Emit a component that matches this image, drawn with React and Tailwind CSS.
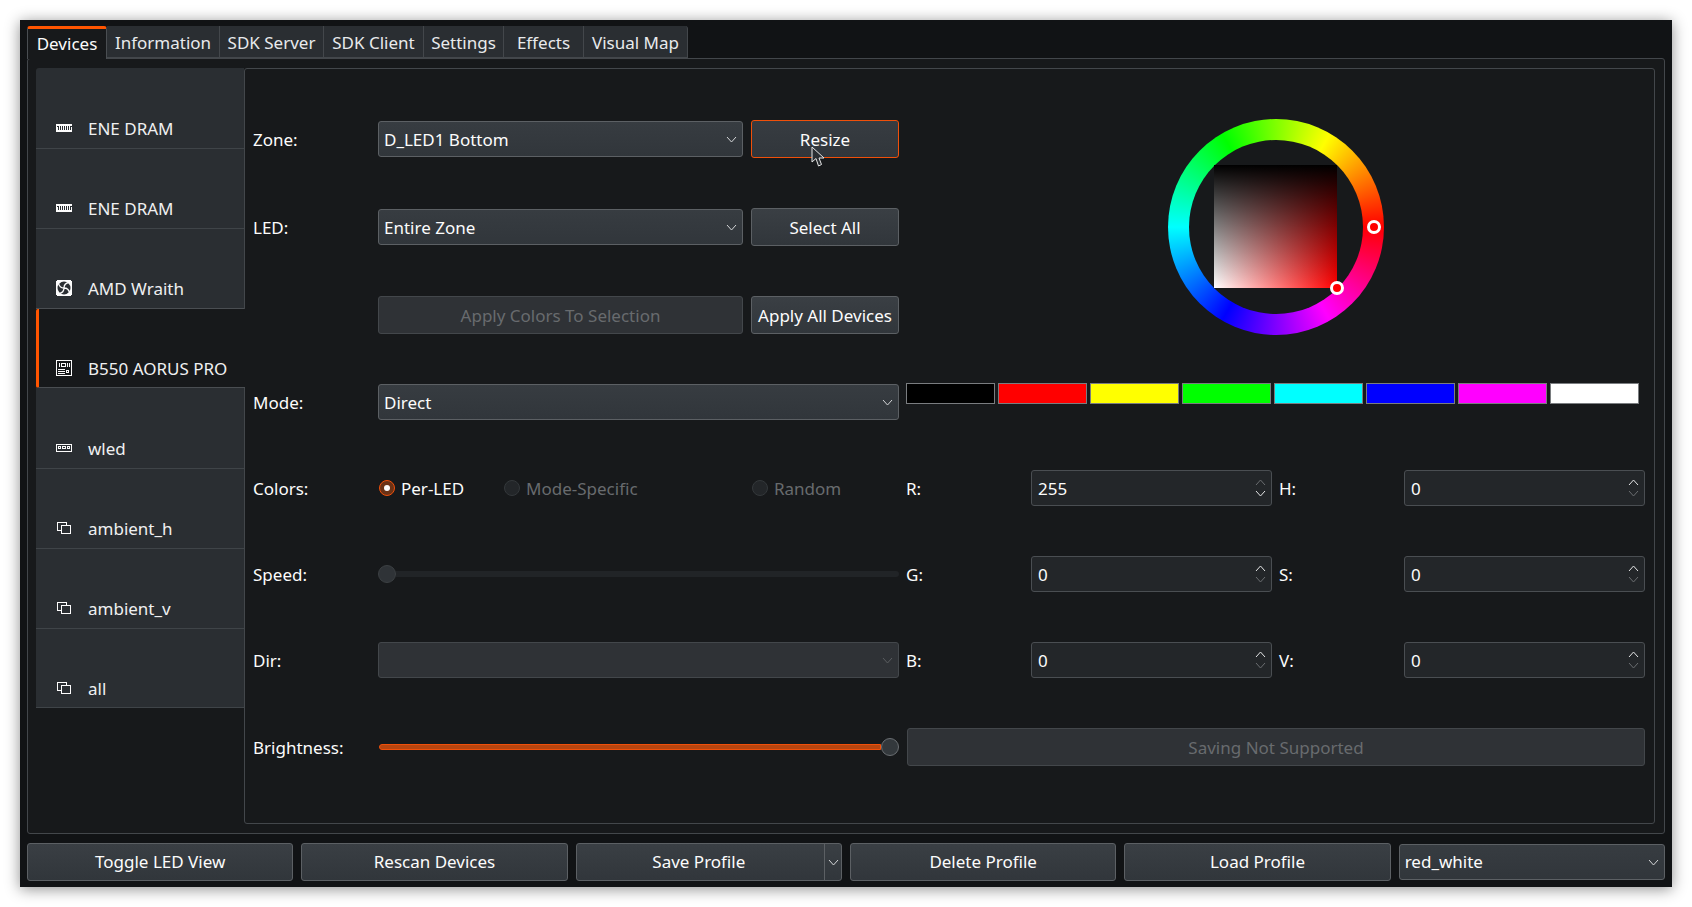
import React from 'react';

const tabs = [
  { name: 'Devices', width: 'w-[80px]' },
  { name: 'Information', width: 'w-[113px]' },
  { name: 'SDK Server', width: 'w-[104px]' },
  { name: 'SDK Client', width: 'w-[100px]' },
  { name: 'Settings', width: 'w-[80px]' },
  { name: 'Effects', width: 'w-[80px]' },
  { name: 'Visual Map', width: 'w-[104px]' },
];

const swatches = [
  'bg-[#000000]',
  'bg-[#ff0000]',
  'bg-[#ffff00]',
  'bg-[#00ff00]',
  'bg-[#00ffff]',
  'bg-[#0000ff]',
  'bg-[#ff00ff]',
  'bg-[#ffffff]',
];

const DramIcon = () => (
  <svg width="16" height="16" viewBox="0 0 16 16" shapeRendering="crispEdges" fill="#fcfcfc">
    <path fillRule="evenodd" d="M0 4h16v8H0zM1 6v1h1v3h1V6zm3 0v4h1V6zm2 0v4h1V6zm2 0v4h1V6zm2 0v4h1V6zm2 0v4h1V6zm2 0v4h1V7h1V6z" />
  </svg>
);

const FanIcon = () => (
  <svg width="16" height="16" viewBox="0 0 16 16">
    <rect width="16" height="16" fill="#fcfcfc" />
    <circle cx="8" cy="8" r="6.5" fill="#2a2e32" />
    <path fill="none" stroke="#fcfcfc" strokeWidth="1.3" d="M8 8C8 5 10 3 13 2.500M8 8C11 8 13 10 13.500 13M8 8C8 11 6 13 3 13.500M8 8C5 8 3 6 2.500 3" />
    <path fill="#2a2e32" d="M0 0h1v1H0zM15 0h1v1h-1zM0 15h1v1H0zM15 15h1v1h-1z" />
  </svg>
);

const BoardIcon = () => (
  <svg width="16" height="16" viewBox="0 0 16 16" shapeRendering="crispEdges" fill="#fcfcfc">
    <path fillRule="evenodd" d="M0 0h16v16H0zM1 1v14h14V1z" />
    <path fillRule="evenodd" d="M3 3h1v4H3zM5 3h5v4H5zM6 4v2h3V4zM11 3h1v4h-1zM13 3h1v4h-1zM2 9h7v1H2zM2 11h7v1H2zM2 13h7v1H2zM10 10h3v3h-3zM11 11v1h1v-1z" />
  </svg>
);

const LedIcon = () => (
  <svg width="16" height="16" viewBox="0 0 16 16" shapeRendering="crispEdges" fill="#fcfcfc">
    <path fillRule="evenodd" d="M0 4h16v8H0zM1 5v6h14V5z" />
    <path fillRule="evenodd" d="M2 6h3v3H2zM3 7v1h1V7zM6 6h4v3H6zM7 7v1h2V7zM11 6h3v3h-3zM12 7v1h1V7z" />
  </svg>
);

const VirtualIcon = () => (
  <svg width="16" height="16" viewBox="0 0 16 16" shapeRendering="crispEdges" fill="#fcfcfc">
    <path fillRule="evenodd" d="M1 2h10v3h4v9H5v-3H1zM2 3v7h3V5h5V3zM6 6v7h8V6z" />
  </svg>
);

const devices = [
  { name: 'ENE DRAM', Icon: DramIcon, height: 'h-[81px]', pad: 'pb-[8px]' },
  { name: 'ENE DRAM', Icon: DramIcon, height: 'h-[80px]', pad: 'pb-[8px]' },
  { name: 'AMD Wraith', Icon: FanIcon, height: 'h-[80px]', pad: 'pb-[8px]' },
  { name: 'B550 AORUS PRO', Icon: BoardIcon, height: 'h-[79px]', pad: 'pb-[7px]', selected: true },
  { name: 'wled', Icon: LedIcon, height: 'h-[81px]', pad: 'pb-[8px]' },
  { name: 'ambient_h', Icon: VirtualIcon, height: 'h-[80px]', pad: 'pb-[8px]' },
  { name: 'ambient_v', Icon: VirtualIcon, height: 'h-[80px]', pad: 'pb-[8px]' },
  { name: 'all', Icon: VirtualIcon, height: 'h-[79px]', pad: 'pb-[7px]' },
];

const Chevron = ({ up, color = '#d4d6d8' }) => (
  <svg width="11" height="7" viewBox="0 0 11 7" fill="none" stroke={color} strokeWidth="1">
    <path d={up ? 'M1 6l4.500-5L10 6' : 'M1 1l4.500 5L10 1'} />
  </svg>
);

const Button = ({ children, active, disabled, bottom, className = '' }) => (
  <div
    className={`flex h-[38px] items-center justify-center rounded-[3px] border ${
      disabled
        ? 'border-[#43474b] bg-[#2f3236] text-[#686b6e]'
        : active
          ? 'border-[#f0500a] bg-gradient-to-b from-[#373c41] to-[#31363b] text-[#fcfcfc]'
          : 'border-[#5c6064] bg-gradient-to-b from-[#3a3f44] to-[#31363b] text-[#fcfcfc]'
    } ${className}`}
  >
    <span className={bottom ? '' : 'pt-[2px]'}>{children}</span>
  </div>
);

const Combo = ({ value, disabled, bottom, className = '' }) => (
  <div
    className={`flex h-[36px] items-center justify-between rounded-[3px] border pl-[5px] pr-[5px] ${
      disabled
        ? 'border-[#43474b] bg-[#2f3236]'
        : 'border-[#5c6064] bg-gradient-to-b from-[#373c41] to-[#31363b] text-[#fcfcfc]'
    } ${className}`}
  >
    <span className={bottom ? '' : 'pt-[2px]'}>{value}</span>
    <Chevron color={disabled ? '#5a5d60' : '#d4d6d8'} />
  </div>
);

const Spin = ({ value, upDim, downDim }) => (
  <div className="flex h-[36px] items-center justify-between rounded-[3px] border border-[#4a4e52] bg-[#232629] pl-[6px] pr-[5px] text-[#fcfcfc]">
    <span className="pt-[2px]">{value}</span>
    <div className="flex flex-col gap-[4px]">
      <Chevron up color={upDim ? '#6a6d70' : '#e4e5e6'} />
      <Chevron color={downDim ? '#6a6d70' : '#e4e5e6'} />
    </div>
  </div>
);

const Radio = ({ label, checked, disabled, className = '' }) => (
  <div className={`flex items-center gap-[6px] pl-px ${className}`}>
    {checked ? (
      <div className="flex h-[16px] w-[16px] items-center justify-center rounded-full border border-[#f0500a] bg-[#6b3216]">
        <div className="h-[6px] w-[6px] rounded-full bg-[#fcfcfc]" />
      </div>
    ) : (
      <div className="h-[16px] w-[16px] rounded-full border border-[#34383b] bg-[#232629]" />
    )}
    <span className={`pt-[2px] ${disabled ? 'text-[#686b6e]' : 'text-[#fcfcfc]'}`}>{label}</span>
  </div>
);

const Label = ({ children }) => <div className="pt-[2px] text-[#fcfcfc]">{children}</div>;

const ColorWheel = () => (
  <div className="relative ml-px h-[216px] w-[216px] rounded-full bg-[conic-gradient(from_90deg,#f00,#f0f,#00f,#0ff,#0f0,#ff0,#f00)]">
    <div className="absolute inset-[21px] rounded-full bg-[#17191b]" />
    <div className="absolute left-[46px] top-[46px] h-[123px] w-[123px] bg-[linear-gradient(to_bottom,#000,transparent),linear-gradient(to_right,#fff,#f00)]" />
    <div className="absolute left-[199px] top-[101px] h-[14px] w-[14px] rounded-full border-[3px] border-white bg-[#ff0000]" />
    <div className="absolute left-[162px] top-[162px] h-[14px] w-[14px] rounded-full border-[3px] border-white bg-[#ff0000]" />
  </div>
);

const Cursor = () => (
  <svg
    className="absolute left-[60px] top-[26px]"
    width="14"
    height="22"
    viewBox="0 0 14 22"
    fill="#2a2e32"
    stroke="#e8e8e8"
    strokeWidth="1"
  >
    <path d="M1 1v15l4-3.500L7.500 20l3-1.500L8 12h5z" />
  </svg>
);

const App = () => {
  return (
    <div className="min-h-screen bg-white pl-[20px] pt-[20px] font-['Noto_Sans',sans-serif] text-[17px] leading-[22px]">
      <div className="flex h-[867px] w-[1652px] flex-col bg-[#111315] px-[7px] pb-[7px] pt-[6px] shadow-[0_2px_14px_rgba(0,0,0,0.45)]">
        {/* Tabs */}
        <div className="relative z-10 flex h-[33px] shrink-0">
          {tabs.map((tab, i) => (
            <div
              key={tab.name}
              className={`flex items-center justify-center ${tab.width} ${
                i === 0
                  ? 'h-[33px] rounded-t-[3px] border-x border-t-[3px] border-x-[#4a4e52] border-t-[#ff5500] bg-[#17191b] pb-[1px] text-[#fcfcfc]'
                  : 'h-[32px] border-b border-r border-[#43474b] bg-[#2a2e32] pt-[3px] text-[#e8eaec]'
              } ${i === tabs.length - 1 ? 'rounded-tr-[3px]' : ''}`}
            >
              {tab.name}
            </div>
          ))}
        </div>

        {/* Pane */}
        <div className="-mt-px flex h-[776px] shrink-0 rounded-[3px] border border-[#43474b] bg-[#17191b] pb-[8px] pl-[8px] pr-[9px] pt-[9px]">
          {/* Device list */}
          <div className="w-[208px] shrink-0">
            {devices.map(({ name, Icon, height, pad, selected }, i) => (
              <div
                key={i}
                className={`flex items-end border-b ${height} ${pad} ${
                  selected
                    ? 'relative z-10 -mr-px rounded-l-[2px] border-l-[3px] border-b-[#4a4e52] border-l-[#ff5500] bg-[#17191b] pl-[17px]'
                    : `border-b-[#3f4448] bg-[#2a2e32] pl-[20px] ${i === 0 ? 'rounded-tl-[3px]' : ''} ${
                        i === 2 ? 'border-b-[#4a4e52]' : ''
                      }`
                }`}
              >
                <div className="flex items-center gap-[16px]">
                  <div className="mb-[2px] h-[16px]">
                    <Icon />
                  </div>
                  <span className="text-[#eff0f1]">{name}</span>
                </div>
              </div>
            ))}
          </div>

          {/* Controls */}
          <div className="h-[756px] flex-1 rounded-[3px] border border-[#43474b] pl-[8px] pt-[26px]">
            <div className="grid grid-cols-[125px_365px_8px_148px_7px_125px_241px_7px_125px_241px] grid-rows-[88px_88px_88px_86px_86px_86px_86px_88px] items-center">
              <Label>Zone:</Label>
              <Combo value="D_LED1 Bottom" />
              <div className="relative col-start-4">
                <Button active>Resize</Button>
                <Cursor />
              </div>
              <div className="col-start-6 col-end-11 row-start-1 row-end-4 flex justify-center">
                <ColorWheel />
              </div>

              <div className="col-start-1 row-start-2"><Label>LED:</Label></div>
              <div className="col-start-2 row-start-2"><Combo value="Entire Zone" /></div>
              <div className="col-start-4 row-start-2"><Button>Select All</Button></div>

              <div className="col-start-2 row-start-3"><Button disabled>Apply Colors To Selection</Button></div>
              <div className="col-start-4 row-start-3"><Button>Apply All Devices</Button></div>

              <div className="col-start-1 row-start-4"><Label>Mode:</Label></div>
              <div className="col-start-2 col-end-5 row-start-4"><Combo value="Direct" /></div>
              <div className="col-start-6 col-end-11 row-start-4 mt-[24px] flex gap-[3px] self-start">
                {swatches.map(color => (
                  <div key={color} className={`h-[21px] w-[89px] border border-[#7a7d80] ${color}`} />
                ))}
              </div>

              <div className="col-start-1 row-start-5"><Label>Colors:</Label></div>
              <div className="col-start-2 col-end-5 row-start-5 flex">
                <Radio label="Per-LED" checked className="w-[125px]" />
                <Radio label="Mode-Specific" disabled className="w-[248px]" />
                <Radio label="Random" disabled />
              </div>
              <div className="col-start-6 row-start-5"><Label>R:</Label></div>
              <div className="col-start-7 row-start-5"><Spin value="255" upDim /></div>
              <div className="col-start-9 row-start-5"><Label>H:</Label></div>
              <div className="col-start-10 row-start-5"><Spin value="0" downDim /></div>

              <div className="col-start-1 row-start-6"><Label>Speed:</Label></div>
              <div className="col-start-2 col-end-5 row-start-6 flex items-center">
                <div className="h-[18px] w-[18px] shrink-0 rounded-full border border-[#3c4043] bg-[#2f3337]" />
                <div className="h-[6px] flex-1 rounded-r-full bg-[#212427]" />
              </div>
              <div className="col-start-6 row-start-6"><Label>G:</Label></div>
              <div className="col-start-7 row-start-6"><Spin value="0" downDim /></div>
              <div className="col-start-9 row-start-6"><Label>S:</Label></div>
              <div className="col-start-10 row-start-6"><Spin value="0" downDim /></div>

              <div className="col-start-1 row-start-7"><Label>Dir:</Label></div>
              <div className="col-start-2 col-end-5 row-start-7"><Combo disabled /></div>
              <div className="col-start-6 row-start-7"><Label>B:</Label></div>
              <div className="col-start-7 row-start-7"><Spin value="0" downDim /></div>
              <div className="col-start-9 row-start-7"><Label>V:</Label></div>
              <div className="col-start-10 row-start-7"><Spin value="0" downDim /></div>

              <div className="col-start-1 row-start-8"><Label>Brightness:</Label></div>
              <div className="col-start-2 col-end-5 row-start-8 ml-px flex items-center">
                <div className="h-[6px] flex-1 rounded-l-full border border-[#f0500a] bg-[#b8450f]" />
                <div className="h-[18px] w-[18px] shrink-0 rounded-full border border-[#6a6e72] bg-[#33383c]" />
              </div>
              <div className="col-start-6 col-end-11 row-start-8 ml-px"><Button disabled>Saving Not Supported</Button></div>
            </div>
          </div>
        </div>

        {/* Bottom buttons */}
        <div className="mt-[9px] grid grid-cols-6 items-center gap-x-[8px]">
          <Button bottom>Toggle LED View</Button>
          <Button bottom>Rescan Devices</Button>
          <div className="flex h-[38px] rounded-[3px] border border-[#5c6064] bg-gradient-to-b from-[#3a3f44] to-[#31363b] text-[#fcfcfc]">
            <div className="flex flex-1 items-center justify-center border-r border-[#5c6064] pr-[3px]">Save Profile</div>
            <div className="flex w-[16px] items-center justify-center"><Chevron /></div>
          </div>
          <Button bottom>Delete Profile</Button>
          <Button bottom>Load Profile</Button>
          <Combo value="red_white" bottom />
        </div>
      </div>
    </div>
  );
};

export default App;
